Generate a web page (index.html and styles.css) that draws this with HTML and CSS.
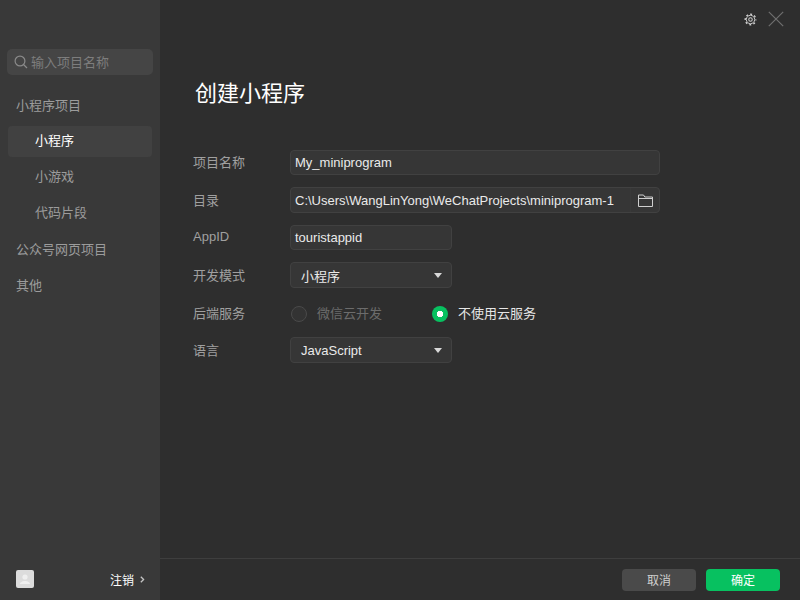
FILE: index.html
```html
<!DOCTYPE html>
<html lang="zh-CN">
<head>
<meta charset="utf-8">
<title>创建小程序</title>
<link rel="stylesheet" href="styles.css">
</head>
<body>
<div class="app">
  <aside class="sidebar">
    <div class="search">
      <svg class="search-icon" width="14" height="14" viewBox="0 0 14 14" fill="none" stroke="#8a8a8a" stroke-width="1.2"><circle cx="6" cy="6" r="4.9"/><path d="M9.5 9.5L13 13"/></svg>
      <span class="search-text">输入项目名称</span>
    </div>
    <nav class="nav">
      <div class="nav-group">小程序项目</div>
      <div class="nav-item active">小程序</div>
      <div class="nav-item">小游戏</div>
      <div class="nav-item">代码片段</div>
      <div class="nav-group">公众号网页项目</div>
      <div class="nav-group">其他</div>
    </nav>
    <div class="user">
      <div class="avatar"><svg width="18" height="18" viewBox="0 0 18 18"><circle cx="9" cy="7" r="2.6" fill="#efefef"/><path d="M4 14c0-2 3-2.6 3.6-3h2.8c.6.4 3.6 1 3.600 3z" fill="#efefef"/></svg></div>
      <div class="logout">注销<svg width="5" height="7" viewBox="0 0 5 7" fill="none" stroke="#c4c4c4" stroke-width="1.3"><path d="M.8 .7L3.600 3.500 .8 6.300"/></svg></div>
    </div>
  </aside>
  <main class="main">
    <div class="topbar">
      <svg width="13" height="13" viewBox="0 0 14 14" fill="none" stroke="#d0d0d0"><circle cx="7" cy="7" r="4.5" stroke-width="1"/><circle cx="7" cy="7" r="5.7" stroke-width="1.500" stroke-dasharray="2.100 2.380" stroke-dashoffset="1.050"/><circle cx="7" cy="7" r="1.900" stroke-width="1.100"/></svg>
      <svg width="16" height="16" viewBox="0 0 16 16" fill="none" stroke="#6f6f6f" stroke-width="1.2"><path d="M.8.8l14.4 14.4M15.2.8L.8 15.2"/></svg>
    </div>
    <h1 class="title">创建小程序</h1>
    <form class="form">
      <div class="row">
        <label class="label">项目名称</label>
        <div class="field wide">My_miniprogram</div>
      </div>
      <div class="row">
        <label class="label">目录</label>
        <div class="field wide path">
          <span class="path-text">C:\Users\WangLinYong\WeChatProjects\miniprogram-1</span>
          <span class="folder"><svg width="15" height="13" viewBox="0 0 15 13" fill="none" stroke="#cfcfcf" stroke-width="1"><path d="M.5 12.500V1h5l1.300 2h7.700v9.500z"/><path d="M.5 4.500h14"/></svg></span>
        </div>
      </div>
      <div class="row">
        <label class="label">AppID</label>
        <div class="field narrow">touristappid</div>
      </div>
      <div class="row">
        <label class="label">开发模式</label>
        <div class="field narrow select">小程序<i class="caret"></i></div>
      </div>
      <div class="row radio-row">
        <label class="label">后端服务</label>
        <div class="radios">
          <span class="radio disabled"><i class="dot"></i>微信云开发</span>
          <span class="radio on"><i class="dot"></i>不使用云服务</span>
        </div>
      </div>
      <div class="row">
        <label class="label">语言</label>
        <div class="field narrow select">JavaScript<i class="caret"></i></div>
      </div>
    </form>
    <footer class="footer">
      <button class="btn cancel" type="button">取消</button>
      <button class="btn ok" type="button">确定</button>
    </footer>
  </main>
</div>
</body>
</html>
```

FILE: styles.css
```css
* { box-sizing: border-box; }
html, body { margin: 0; padding: 0; }
body {
  width: 800px;
  height: 600px;
  overflow: hidden;
  background: #2e2e2e;
  font-family: "Liberation Sans", "Noto Sans CJK SC", sans-serif;
  font-size: 13px;
  color: #d0d0d0;
}
.app { display: flex; width: 800px; height: 600px; }

.sidebar {
  width: 160px;
  flex: none;
  display: flex;
  flex-direction: column;
  background: #393939;
  padding-top: 49px;
}
.search {
  margin: 0 7px;
  height: 26px;
  background: #454545;
  border-radius: 5px;
  display: flex;
  align-items: center;
  padding-left: 7px;
  gap: 3px;
  color: #7d7d7d;
}
.search-icon { flex: none; }
.search-text { padding-bottom: 2px; }
.nav { margin-top: 12px; flex: 1; display: flex; flex-direction: column; }
.nav-group {
  height: 36px;
  line-height: 38px;
  padding-left: 16px;
  color: #9c9c9c;
}
.nav-item {
  height: 31px;
  line-height: 30px;
  margin: 3px 8px 2px;
  padding-left: 27px;
  color: #9c9c9c;
  border-radius: 4px;
}
.nav-item.active { background: #414141; color: #fff; }
.user {
  height: 42px;
  flex: none;
  display: flex;
  align-items: center;
  justify-content: space-between;
  padding: 0 15px 0 16px;
}
.avatar {
  width: 18px;
  height: 18px;
  background: #dcdcdc;
  border-radius: 2px;
}
.avatar svg { display: block; }
.logout {
  display: flex;
  align-items: center;
  gap: 6px;
  color: #fff;
  font-size: 12px;
}

.main {
  flex: 1;
  display: flex;
  flex-direction: column;
  background: #2e2e2e;
  min-width: 0;
}
.topbar {
  height: 38px;
  flex: none;
  display: flex;
  justify-content: flex-end;
  align-items: center;
  gap: 11px;
  padding-right: 16px;
}
.title {
  margin: 0;
  padding: 39px 0 0 35px;
  height: 112px;
  font-size: 22px;
  line-height: 34px;
  font-weight: 400;
  color: #fff;
}
.form { flex: 1; padding-left: 33px; }
.row { display: flex; align-items: center; height: 26px; margin-bottom: 12px; }
.row:nth-child(odd) { height: 25px; }
.label { width: 97px; flex: none; color: #a0a0a0; padding-bottom: 2px; }
.radio-row .label { padding-bottom: 0; }
.field {
  height: 100%;
  background: #363636;
  border: 1px solid #414141;
  border-radius: 4px;
  display: flex;
  align-items: center;
  padding-left: 4px;
  font-size: 13px;
  color: #eaeaea;
}
.wide { width: 370px; }
.narrow { width: 162px; }
.path { justify-content: space-between; padding-right: 0; }
.path-text { flex: 1; white-space: nowrap; }
.folder {
  width: 29px;
  height: 24px;
  flex: none;
  display: flex;
  align-items: center;
  justify-content: center;
  border-left: 1px solid #393939;
}
.select {
  padding: 0 9px 0 10px;
  justify-content: space-between;
}
.caret {
  width: 0;
  height: 0;
  border-left: 4px solid transparent;
  border-right: 4px solid transparent;
  border-top: 5px solid #d8d8d8;
}
.radios { display: flex; gap: 50px; }
.radio { display: flex; align-items: center; gap: 10px; }
.radio .dot {
  width: 16px;
  height: 16px;
  margin-top: 3px;
  border-radius: 50%;
  flex: none;
}
.radio.disabled { color: #6c6c6c; margin-left: 1px; }
.radio.disabled .dot { border: 1px solid #4a4a4a; background: #333; }
.radio.on { color: #e6e6e6; }
.radio.on .dot { background: radial-gradient(circle, #fff 0 3px, #07c160 3.500px); }

.footer {
  height: 42px;
  flex: none;
  border-top: 1px solid #3e3e3e;
  display: flex;
  justify-content: flex-end;
  align-items: center;
  gap: 10px;
  padding-right: 20px;
}
.btn {
  width: 74px;
  height: 22px;
  border: none;
  border-radius: 4px;
  font: 12px "Liberation Sans", "Noto Sans CJK SC", sans-serif;
  padding: 0;
}
.cancel { background: #4a4a4a; color: #d0d0d0; }
.ok { background: #07c160; color: #fff; }
```
